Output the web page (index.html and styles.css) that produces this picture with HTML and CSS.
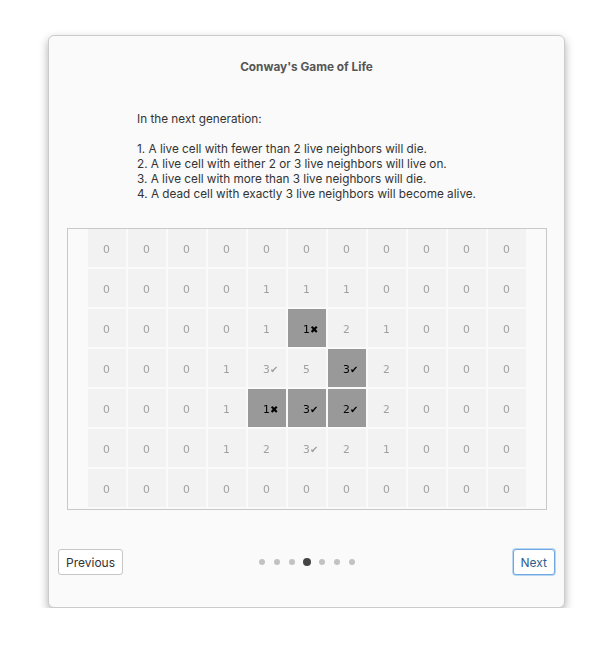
FILE: index.html
```html
<!DOCTYPE html>
<html>
<head>
<meta charset="utf-8">
<link rel="stylesheet" href="styles.css">
</head>
<body>
<div class="card">
  <h1 class="title">Conway's Game of Life</h1>
  <div class="intro">
    <p class="lead">In the next generation:</p>
    <p class="rules">1. A live cell with fewer than 2 live neighbors will die.<br>2. A live cell with either 2 or 3 live neighbors will live on.<br>3. A live cell with more than 3 live neighbors will die.<br>4. A dead cell with exactly 3 live neighbors will become alive.</p>
  </div>
  <div class="board">
    <div class="grid" id="grid"></div>
  </div>
  <div class="footer">
    <div class="left"><button class="btn">Previous</button></div>
    <div class="dots">
      <span class="dot"></span><span class="dot"></span><span class="dot"></span><span class="dot active"></span><span class="dot"></span><span class="dot"></span><span class="dot"></span>
    </div>
    <div class="right"><button class="btn primary">Next</button></div>
  </div>
</div>
<script>
var counts = [
  [0,0,0,0,0,0,0,0,0,0,0],
  [0,0,0,0,1,1,1,0,0,0,0],
  [0,0,0,0,1,1,2,1,0,0,0],
  [0,0,0,1,3,5,3,2,0,0,0],
  [0,0,0,1,1,3,2,2,0,0,0],
  [0,0,0,1,2,3,2,1,0,0,0],
  [0,0,0,0,0,0,0,0,0,0,0]
];
var live = {"2,5":1,"3,6":1,"4,4":1,"4,5":1,"4,6":1};
var g = document.getElementById('grid');
for (var r = 0; r < 7; r++) {
  for (var c = 0; c < 11; c++) {
    var n = counts[r][c];
    var isLive = live[r + ',' + c];
    var cell = document.createElement('div');
    cell.className = 'cell' + (isLive ? ' live' : '');
    var num = document.createElement('span');
    num.className = 'num';
    num.textContent = n;
    var mark = '';
    if (isLive) mark = (n === 2 || n === 3) ? '\u2714' : '\u2716';
    else if (n === 3) mark = '\u2714';
    if (mark) {
      var m = document.createElement('span');
      m.className = 'mark';
      m.textContent = mark;
      num.appendChild(m);
    }
    cell.appendChild(num);
    g.appendChild(cell);
  }
}
</script>
</body>
</html>
```
FILE: styles.css
```css
html, body {
  margin: 0;
  padding: 0;
  background: #ffffff;
}
body {
  font-family: Inter, "Noto Sans", "Liberation Sans", sans-serif;
  padding: 35px 0 0 48px;
}
.card {
  box-sizing: border-box;
  width: 517px;
  height: 573px;
  background: #fafafa;
  border: 1px solid #cbcbcb;
  border-radius: 6px;
  box-shadow: 0 4px 10px rgba(0,0,0,0.32);
  display: flex;
  flex-direction: column;
  align-items: center;
}
.title {
  margin: 23px 0 0;
  font-size: 11.8px;
  line-height: 16px;
  font-weight: 700;
  color: #555555;
}
.intro {
  margin-top: 37px;
  font-size: 11.75px;
  line-height: 15px;
  color: #333333;
}
.intro p {
  margin: 0;
}
.lead {
  margin-bottom: 15px !important;
}
.board {
  box-sizing: border-box;
  margin-top: 26px;
  width: 480px;
  height: 282px;
  border: 1px solid #c8c8c8;
  background: #fafafa;
  padding: 0 0 0 20px;
}
.grid {
  display: grid;
  grid-template-columns: repeat(11, 38px);
  grid-template-rows: repeat(7, 38px);
  gap: 2px;
  transform: translateZ(0);
}
.cell {
  background: #f2f2f2;
  display: flex;
  align-items: center;
  justify-content: center;
  padding-top: 2px;
  box-sizing: border-box;
  font-family: "DejaVu Sans", sans-serif;
  font-size: 10.8px;
  color: #a0a0a0;
}
.cell.live {
  background: #999999;
  color: #000000;
}
.num {
  position: relative;
}
.mark {
  position: absolute;
  left: 100%;
  top: 0;
  font-size: 10px;
  line-height: 13px;
}
.footer {
  margin-top: 39px;
  align-self: stretch;
  padding: 0 9px;
  display: grid;
  grid-template-columns: 1fr auto 1fr;
  align-items: center;
}
.left {
  display: flex;
  justify-content: flex-start;
}
.right {
  display: flex;
  justify-content: flex-end;
}
.btn {
  box-sizing: border-box;
  height: 26px;
  padding: 0 7px;
  font-family: Inter, "Noto Sans", "Liberation Sans", sans-serif;
  font-size: 12px;
  color: #333333;
  background: #ffffff;
  border: 1px solid #c6c6c6;
  border-radius: 3px;
}
.btn.primary {
  color: #2d5d8c;
  border-color: #6fa8e0;
  box-shadow: 0 0 0 1px #b9d7f3;
}
.dots {
  display: flex;
  align-items: center;
  gap: 9px;
}
.dot {
  width: 6px;
  height: 6px;
  border-radius: 50%;
  background: #c2c2c2;
}
.dot.active {
  width: 8px;
  height: 8px;
  margin: 0 -1px;
  background: #444444;
}
```
